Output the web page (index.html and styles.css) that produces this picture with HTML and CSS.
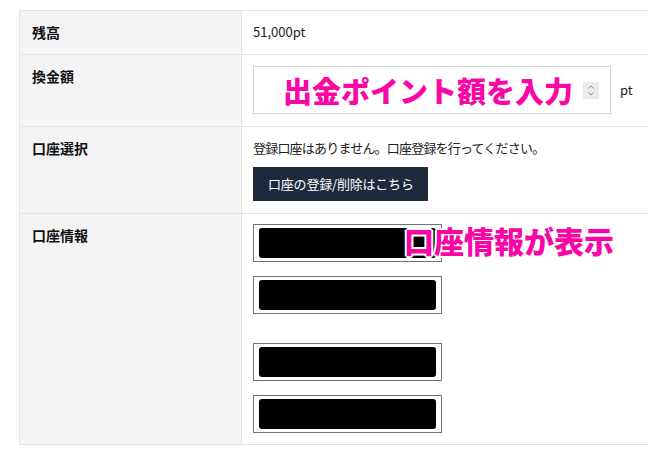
FILE: index.html
```html
<!DOCTYPE html>
<html lang="ja">
<head>
<meta charset="utf-8">
<link rel="stylesheet" href="styles.css">
</head>
<body>
<div class="wrap">
  <div class="form">
    <div class="th">残高</div>
    <div class="td">51,000pt</div>

    <div class="th">換金額</div>
    <div class="td">
      <div class="amount">
        <div class="amount-input">
          <span class="ph">出金ポイント額を入力</span>
          <span class="spin"><svg width="16" height="17" viewBox="0 0 16 17"><rect width="16" height="17" fill="#e9e9ee"/><path d="M5.5 6.5 L8 4 L10.5 6.5 M5.5 10.5 L8 13 L10.5 10.5" fill="none" stroke="#8a8a90" stroke-width="1"/></svg></span>
        </div>
        <span class="unit">pt</span>
      </div>
    </div>

    <div class="th">口座選択</div>
    <div class="td">
      <p class="note">登録口座はありません。口座登録を行ってください。</p>
      <a class="btn">口座の登録/削除はこちら</a>
    </div>

    <div class="th">口座情報</div>
    <div class="td account">
      <div class="field"><span class="mask wide"></span></div>
      <div class="field"><span class="mask"></span></div>
      <div class="field gap"><span class="mask"></span></div>
      <div class="field"><span class="mask"></span></div>
      <span class="callout">口座情報が表示</span>
    </div>
  </div>
</div>
</body>
</html>
```

FILE: styles.css
```css
html, body { margin: 0; padding: 0; background: #fff; }
body {
  font-family: "Noto Sans CJK JP", "Noto Sans", sans-serif;
  color: #222;
  overflow: hidden;
}
.wrap {
  padding: 10px 0 0 19px;
  width: 629px;
  overflow: hidden;
}
.form {
  display: grid;
  grid-template-columns: 222px 1fr;
  width: 700px;
  border-top: 1px solid #e2e2e2;
  border-left: 1px solid #e2e2e2;
}
.th, .td {
  border-right: 1px solid #e2e2e2;
  border-bottom: 1px solid #e2e2e2;
  padding: 11px 12px 12px;
  line-height: 20px;
}
.th {
  background: #f4f4f4;
  font-weight: bold;
  font-size: 14px;
  color: #111;
}
.td {
  font-size: 13px;
  padding-left: 11px;
  font-feature-settings: "pkna";
}
.amount {
  display: flex;
  align-items: center;
  gap: 8px;
}
.amount-input {
  width: 358px;
  height: 48px;
  box-sizing: border-box;
  border: 1px solid #d3d3d8;
  display: flex;
  align-items: center;
  padding: 0 11px 0 29px;
}
.ph {
  flex: 1;
  color: #fb06a6;
  font-size: 29px;
  font-weight: 900;
  line-height: 1;
  font-feature-settings: normal;
  letter-spacing: 0;
}
.spin { display: flex; }
.unit { font-size: 13px; color: #222; padding-left: 1px; }
.note { margin: 0; letter-spacing: -0.8px; }
.btn {
  display: inline-block;
  margin-top: 9px;
  height: 34px;
  line-height: 34px;
  padding: 0 14px 0 15px;
  background: #1e2a3c;
  color: #fff;
  font-size: 13px;
  letter-spacing: -0.2px;
}
.account {
  position: relative;
  padding-top: 10px;
  padding-bottom: 11px;
  display: flex;
  flex-direction: column;
  align-items: flex-start;
  gap: 14px;
}
.field {
  width: 189px;
  height: 38px;
  box-sizing: border-box;
  border: 1px solid #6e7080;
  padding: 3px 5px 3px 5px;
  display: flex;
}
.field.gap { margin-top: 15px; }
.mask {
  flex: 1;
  background: #000;
  border-radius: 3px;
}
.callout {
  position: absolute;
  left: 162px;
  top: 10px;
  font-size: 30px;
  line-height: 32px;
  font-weight: 900;
  color: #fb06a6;
  font-feature-settings: normal;
  text-shadow: 2px 0 0 #fff, -2px 0 0 #fff, 0 2px 0 #fff, 0 -2px 0 #fff,
    1px 1px 0 #fff, -1px -1px 0 #fff, 1px -1px 0 #fff, -1px 1px 0 #fff;
}
```
